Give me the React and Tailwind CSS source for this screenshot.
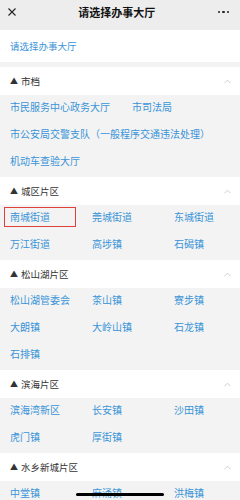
const sections = [
	{
		title: '市档',
		items: ['市民服务中心政务大厅', '市司法局', '市公安局交警支队（一般程序交通违法处理）', '机动车查验大厅']
	},
	{
		title: '城区片区',
		items: ['南城街道', '莞城街道', '东城街道', '万江街道', '高埗镇', '石碣镇'],
		selected: '南城街道'
	},
	{
		title: '松山湖片区',
		items: ['松山湖管委会', '茶山镇', '寮步镇', '大朗镇', '大岭山镇', '石龙镇', '石排镇']
	},
	{
		title: '滨海片区',
		items: ['滨海湾新区', '长安镇', '沙田镇', '虎门镇', '厚街镇']
	},
	{
		title: '水乡新城片区',
		items: ['中堂镇', '麻涌镇', '洪梅镇', '道滘镇', '望牛墩镇']
	}
];

const font = { fontFamily: '"Noto Sans CJK SC", "Noto Sans", sans-serif' };

function Chevron() {
	return (
		<svg className="w-[7px] h-[5px] text-[#c8c8c8]" viewBox="0 0 8 5" fill="none" stroke="currentColor" strokeWidth="1">
			<path d="M0.5 4.5 L4 1 L7.5 4.5" />
		</svg>
	);
}

function Section({ section }) {
	return (
		<div>
			<div className="h-[28px] bg-white flex items-center justify-between pl-[10px] pr-[9px]">
				<div className="flex items-center text-[9.5px] text-[#333]">
					<span className="text-[8px] mr-[3px]">▲</span>
					<span>{section.title}</span>
				</div>
				<Chevron />
			</div>
			<div className="bg-[#f3f3f3] pl-[4px] pb-[1px] flex flex-wrap gap-x-[10px]">
				{section.items.map((item) => (
					<div key={item} className="h-[27px] pt-[2px]">
						<div
							className={`min-w-[72px] px-[5px] py-[2px] text-[10px] leading-[14px] text-[#3a93d8] border whitespace-nowrap ${
								section.selected === item ? 'border-[#e0403a]' : 'border-transparent'
							}`}
						>
							{item}
						</div>
					</div>
				))}
			</div>
		</div>
	);
}

export default function App() {
	return (
		<div className="relative w-[240px] h-[500px] overflow-hidden bg-[#f3f3f3]" style={font}>
			{/* nav bar */}
			<div className="h-[30px] bg-[#ededed] flex items-center justify-between px-[8px] pb-[6px]">
				<svg className="w-[8px] h-[8px] text-[#222]" viewBox="0 0 8 8" fill="none" stroke="currentColor" strokeWidth="1.1">
					<path d="M0.5 0.5 L7.5 7.5 M7.5 0.5 L0.5 7.5" />
				</svg>
				<div className="text-[11px] font-bold text-[#111] leading-none">请选择办事大厅</div>
				<div className="flex gap-[2px] mr-[3px]">
					<span className="w-[2.5px] h-[2.5px] rounded-full bg-[#222]" />
					<span className="w-[2.5px] h-[2.5px] rounded-full bg-[#222]" />
					<span className="w-[2.5px] h-[2.5px] rounded-full bg-[#222]" />
				</div>
			</div>

			<div className="h-[32px] bg-white flex items-center pl-[10px] text-[9.5px] text-[#3a93d8]">
				请选择办事大厅
			</div>
			<div className="h-[5px]" />

			{sections.map((s) => (
				<Section key={s.title} section={s} />
			))}

			<div className="absolute left-[76px] bottom-[4px] w-[88px] h-[3px] rounded-full bg-black" />
		</div>
	);
}
